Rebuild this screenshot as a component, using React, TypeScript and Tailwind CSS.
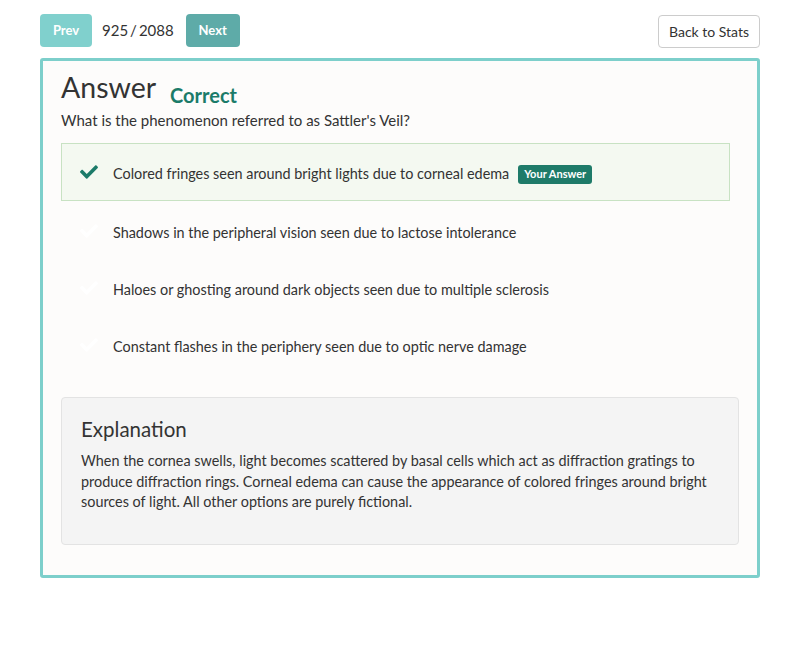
import React from "react";
import { FaCheck } from "react-icons/fa";

const options = [
  { text: "Colored fringes seen around bright lights due to corneal edema", correct: true },
  { text: "Shadows in the peripheral vision seen due to lactose intolerance", correct: false },
  { text: "Haloes or ghosting around dark objects seen due to multiple sclerosis", correct: false },
  { text: "Constant flashes in the periphery seen due to optic nerve damage", correct: false },
];

export default function App() {
  return (
    <div className="w-[800px] h-[664px] bg-white text-[#333] font-['Lato',sans-serif]">
      <div className="pt-[14px] px-[40px] flex items-start justify-between">
        <div className="flex items-center">
          <button className="w-[52px] h-[33px] rounded-[4px] bg-[#80d0cd] text-white text-[13px] font-bold">Prev</button>
          <span className="ml-[10px] text-[15px] text-[#333]">925<span className="mx-[2px]">/</span>2088</span>
          <button className="ml-[12px] w-[54px] h-[33px] rounded-[4px] bg-[#5eaba8] text-white text-[13px] font-bold">Next</button>
        </div>
        <button className="mt-[1px] w-[102px] h-[33px] rounded-[4px] border border-[#cccccc] bg-white text-[14px] text-[#333]">Back to Stats</button>
      </div>
      <div className="mx-[40px] mt-[10px] border-[3px] border-[#7dcfcb] rounded-[3px] bg-[#fdfcfb] pl-[18px] pr-[18px] pt-[8px] pb-[30px]">
        <div className="flex items-end">
          <h1 className="text-[28.5px] leading-[36px] text-[#333]">Answer</h1>
          <span className="ml-[14px] text-[20px] font-bold text-[#1b7b69] leading-[26px] mb-[-3px]">Correct</span>
        </div>
        <p className="text-[15px] leading-[20px] mt-[5px]">What is the phenomenon referred to as Sattler's Veil?</p>
        <div className="mt-[13px] mr-[9px] flex flex-col">
          {options.map((o, i) => (
            <div
              key={i}
              className={
                "h-[58px] flex items-center border pl-[16px] " +
                (o.correct ? "bg-[#f4f9f1] border-[#c8e2c3] mb-[1px]" : "border-transparent mb-[-1px]")
              }
            >
              <FaCheck className={"w-[22px] h-[18px] " + (o.correct ? "text-[#1b7b69]" : "text-white")} />
              <span className="ml-[13px] text-[14.4px] leading-[20px] mt-[4px]">{o.text}</span>
              {o.correct && (
                <span className="ml-[9px] mt-[4px] px-[6px] h-[19px] flex items-center rounded-[3px] bg-[#1e7b69] text-white text-[11px] font-bold">Your Answer</span>
              )}
            </div>
          ))}
        </div>
        <div className="mt-[24px] bg-[#f4f4f4] border border-[#e3e3e3] rounded-[4px] pl-[19px] pr-[12px] pt-[17px] pb-[31px]">
          <h2 className="text-[20.5px] leading-[28px] text-[#333]">Explanation</h2>
          <p className="mt-[8px] text-[14.4px] leading-[20.5px] text-[#333]">
            When the cornea swells, light becomes scattered by basal cells which act as diffraction gratings to produce diffraction rings. Corneal edema can cause the appearance of colored fringes around bright sources of light. All other options are purely fictional.
          </p>
        </div>
      </div>
    </div>
  );
}
